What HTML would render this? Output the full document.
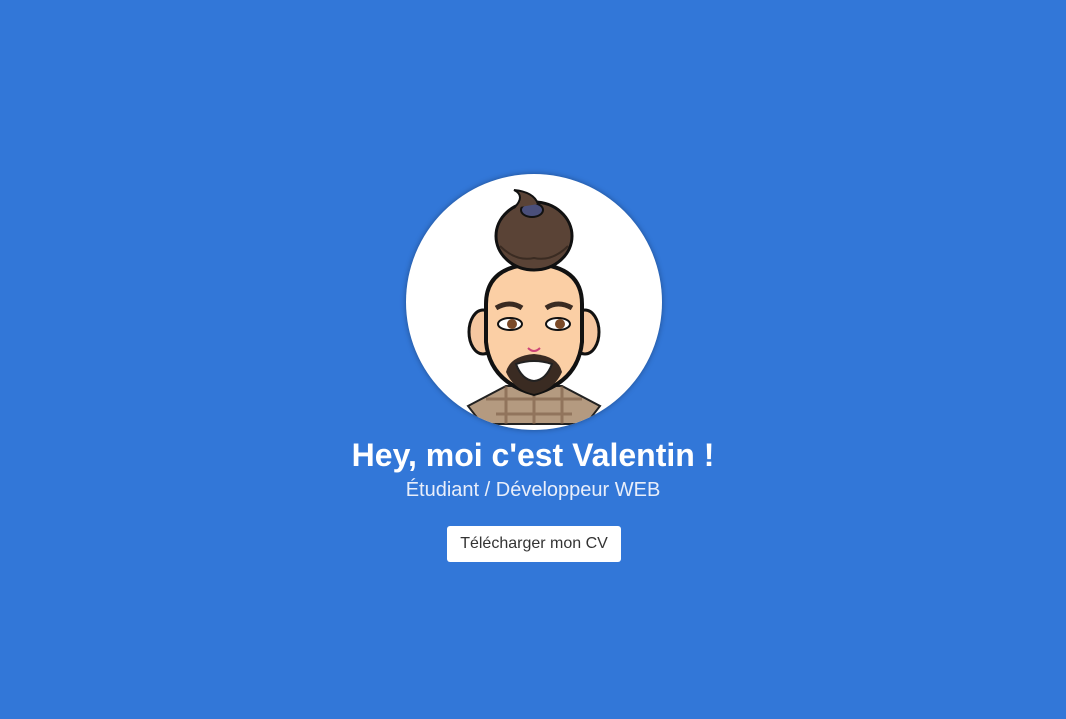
<!DOCTYPE html>
<html><head><meta charset="utf-8"><style>
html,body{margin:0;padding:0;width:1066px;height:719px;background:#3277d8;overflow:hidden;font-family:"Liberation Sans",Arial,sans-serif}
.av{position:absolute;left:406px;top:174px;width:256px;height:256px;border-radius:50%;background:#fff;box-shadow:0 0 6px rgba(0,0,0,.35);overflow:hidden}
h1{position:absolute;top:435px;left:0;width:1066px;text-align:center;margin:0;color:#fff;font-size:32px;font-weight:bold;line-height:40px}
.sub{position:absolute;top:478px;left:0;width:1066px;text-align:center;color:#e8eefa;font-size:20px;line-height:24px}
.btn{position:absolute;left:447px;top:526px;width:174px;height:36px;background:#fff;border-radius:3px;color:#333;font-size:16px;line-height:36px;text-align:center}
</style></head><body>
<div class="av"><svg width="256" height="256" viewBox="0 0 256 256">
<path d="M62 232 L100 212 L156 212 L194 232 L180 250 L76 250 Z" fill="#b49a80" stroke="#222" stroke-width="2"/>
<path d="M80 225 L176 225 M90 240 L166 240 M100 212 L100 250 M128 212 L128 250 M156 212 L156 250" stroke="#7a5c45" stroke-width="3" opacity=".6"/>
<ellipse cx="77" cy="158" rx="14" ry="22" fill="#f5c7a0" stroke="#111" stroke-width="3"/>
<ellipse cx="179" cy="158" rx="14" ry="22" fill="#f5c7a0" stroke="#111" stroke-width="3"/>
<path d="M80 130 Q80 92 128 90 Q176 92 176 130 L176 168 Q172 208 128 220 Q84 208 80 168 Z" fill="#fbcfa5" stroke="#111" stroke-width="4"/>
<path d="M100 198 Q104 182 128 180 Q152 182 156 198 Q148 216 128 220 Q108 216 100 198Z" fill="#3a2b22"/>
<path d="M110 190 Q128 184 146 190 Q140 206 128 207 Q116 206 110 190Z" fill="#fff" stroke="#222" stroke-width="2"/>
<path d="M90 134 Q104 126 116 134 M140 134 Q152 126 166 134" stroke="#3a2b22" stroke-width="5" fill="none"/>
<ellipse cx="104" cy="150" rx="12" ry="6" fill="#fff" stroke="#111" stroke-width="2"/><circle cx="106" cy="150" r="5" fill="#7a4a28"/>
<ellipse cx="152" cy="150" rx="12" ry="6" fill="#fff" stroke="#111" stroke-width="2"/><circle cx="154" cy="150" r="5" fill="#7a4a28"/>
<path d="M122 174 Q128 180 134 174" stroke="#c47" stroke-width="2" fill="none"/>
<ellipse cx="128" cy="62" rx="38" ry="34" fill="#5a4336" stroke="#111" stroke-width="3"/>
<path d="M94 72 Q110 88 128 84 Q146 88 162 72" stroke="#3a2b22" stroke-width="2" fill="none"/>
<ellipse cx="126" cy="36" rx="11" ry="7" fill="#4a4f7a" stroke="#111" stroke-width="2"/>
<path d="M108 34 Q120 22 108 16 Q128 18 132 30" fill="#5a4336" stroke="#111" stroke-width="2"/>
</svg></div>
<h1>Hey, moi c'est Valentin !</h1>
<div class="sub">Étudiant / Développeur WEB</div>
<div class="btn">Télécharger mon CV</div>
</body></html>
